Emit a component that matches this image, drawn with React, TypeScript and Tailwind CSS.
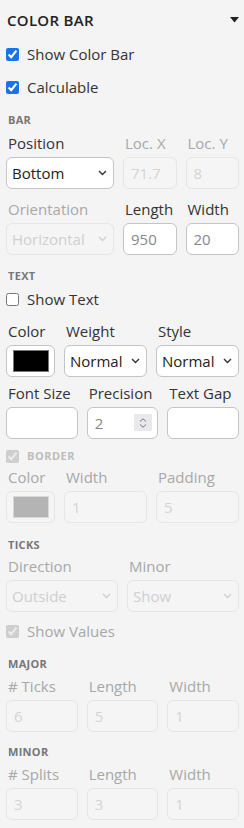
import React from 'react';

const font = { fontFamily: '"Open Sans", "Noto Sans", sans-serif' };

function Chevron({ disabled }: { disabled?: boolean }) {
    return (
        <svg
            className="pointer-events-none absolute right-[7px] top-1/2 -translate-y-1/2"
            width="9" height="6" viewBox="0 0 9 6" fill="none"
        >
            <path d="M1 1l3.5 3.5L8 1" stroke={disabled ? '#d0d0d0' : '#333'} strokeWidth="1.4" />
        </svg>
    );
}

function Select({ value, disabled }: { value: string; disabled?: boolean }) {
    return (
        <div className="relative">
            <select
                disabled={disabled}
                defaultValue={value}
                className={`h-8 w-full appearance-none rounded-md border pl-[5px] pr-5 text-[15px] outline-none ${disabled
                    ? 'border-[#e6e6e6] bg-[#f5f5f5] text-[#cfcfcf]'
                    : 'border-[#c4c4c4] bg-white text-[#222]'
                    }`}
            >
                <option>{value}</option>
            </select>
            <Chevron disabled={disabled} />
        </div>
    );
}

function TextBox({ value, disabled, spinner }: { value?: string; disabled?: boolean; spinner?: boolean }) {
    return (
        <div className="relative">
            <input
                type="text"
                readOnly
                disabled={disabled}
                defaultValue={value ?? ''}
                className={`h-8 w-full rounded-md border px-[7px] text-[15px] outline-none ${disabled
                    ? 'border-[#e6e6e6] bg-[#f5f5f5] text-[#d4d4d4]'
                    : 'border-[#c4c4c4] bg-white text-[#888]'
                    }`}
            />
            {spinner && (
                <span className="absolute right-[6px] top-[7px] flex h-[17px] w-[18px] flex-col items-center justify-center gap-[2px] bg-[#e9e9ed]">
                    <svg width="8" height="4" viewBox="0 0 8 4" fill="none"><path d="M1 3.5L4 0.8l3 2.7" stroke="#777" strokeWidth="1" /></svg>
                    <svg width="8" height="4" viewBox="0 0 8 4" fill="none"><path d="M1 0.5L4 3.2l3-2.7" stroke="#777" strokeWidth="1" /></svg>
                </span>
            )}
        </div>
    );
}

function ColorBox({ color, disabled }: { color: string; disabled?: boolean }) {
    return (
        <div className={`flex h-8 w-full items-center justify-center rounded-md border ${disabled ? 'border-[#e6e6e6] bg-[#f5f5f5]' : 'border-[#c4c4c4] bg-white'}`}>
            <div className={`h-[22px] w-[36px] border ${disabled ? 'border-[#d8d8d8]' : 'border-[#777]'}`} style={{ background: color }} />
        </div>
    );
}

function Label({ children, disabled, className = '' }: { children: React.ReactNode; disabled?: boolean; className?: string }) {
    return (
        <div className={`h-5 whitespace-nowrap pl-[2px] text-[15px] leading-5 ${disabled ? 'text-[#a8a8a8]' : 'text-[#333]'} ${className}`}>
            {children}
        </div>
    );
}

function Section({ children, className = '' }: { children: React.ReactNode; className?: string }) {
    return (
        <div className={`h-[14px] pl-[2px] text-[11px] font-bold leading-[14px] tracking-[0.3px] text-[#777] ${className}`}>
            {children}
        </div>
    );
}

function Check({ label, checked, disabled, className = '', labelClass = '' }: { label: string; checked?: boolean; disabled?: boolean; className?: string; labelClass?: string }) {
    return (
        <label className={`flex h-5 items-center gap-[8px] ${className}`}>
            <input
                type="checkbox"
                defaultChecked={checked}
                disabled={disabled}
                className="m-0 h-[13px] w-[13px] accent-[#1a73e8]"
            />
            <span className={`text-[15px] leading-5 ${disabled ? 'text-[#a8a8a8]' : 'text-[#333]'} ${labelClass}`}>{label}</span>
        </label>
    );
}

export default function App() {
    return (
        <div className="min-h-[828px] w-[244px] bg-[#f4f4f4] pb-2 pl-[6px] pr-[5px] pt-[10px]" style={font}>
            <div className="flex h-5 items-center justify-between">
                <span className="pl-[1px] text-[15px] font-semibold tracking-[0.3px] text-[#222]">COLOR BAR</span>
                <svg width="9" height="6" viewBox="0 0 9 6" className="mr-[0px]"><path d="M0 0h9L4.5 5.5z" fill="#222" /></svg>
            </div>

            <Check label="Show Color Bar" checked className="mt-[14px]" />
            <Check label="Calculable" checked className="mt-[13px]" />

            <Section className="mt-[16px]">BAR</Section>
            <div className="mt-[6px] grid grid-cols-[108px_1fr_1fr] gap-x-[9px]">
                <Label>Position</Label>
                <Label disabled>Loc. X</Label>
                <Label disabled>Loc. Y</Label>
                <div className="mt-1"><Select value="Bottom" /></div>
                <div className="mt-1"><TextBox value="71.7" disabled /></div>
                <div className="mt-1"><TextBox value="8" disabled /></div>
                <Label disabled className="mt-[10px]">Orientation</Label>
                <Label className="mt-[10px]">Length</Label>
                <Label className="mt-[10px]">Width</Label>
                <div className="mt-1"><Select value="Horizontal" disabled /></div>
                <div className="mt-1"><TextBox value="950" /></div>
                <div className="mt-1"><TextBox value="20" /></div>
            </div>

            <Section className="mt-[14px]">TEXT</Section>
            <Check label="Show Text" className="mt-[6px]" />

            <div className="mt-[12px] grid grid-cols-[49px_1fr_1fr] gap-x-[9px]">
                <Label>Color</Label>
                <Label>Weight</Label>
                <Label>Style</Label>
                <div className="mt-1"><ColorBox color="#000" /></div>
                <div className="mt-1"><Select value="Normal" /></div>
                <div className="mt-1"><Select value="Normal" /></div>
            </div>

            <div className="mt-[6px] grid grid-cols-3 gap-x-[9px]">
                <Label>Font Size</Label>
                <Label>Precision</Label>
                <Label>Text Gap</Label>
                <div className="mt-1"><TextBox /></div>
                <div className="mt-1"><TextBox value="2" spinner /></div>
                <div className="mt-1"><TextBox /></div>
            </div>

            <Check label="BORDER" checked disabled className="mt-[7px]" labelClass="!text-[11px] font-bold tracking-[0.5px] !text-[#bdbdbd]" />
            <div className="mt-[1px] grid grid-cols-[49px_1fr_1fr] gap-x-[9px]">
                <Label disabled>Color</Label>
                <Label disabled>Width</Label>
                <Label disabled>Padding</Label>
                <div className="mt-1"><ColorBox color="#b4b4b4" disabled /></div>
                <div className="mt-1"><TextBox value="1" disabled /></div>
                <div className="mt-1"><TextBox value="5" disabled /></div>
            </div>

            <Section className="mt-[15px]">TICKS</Section>
            <div className="mt-[4px] grid grid-cols-2 gap-x-[9px]">
                <Label disabled>Direction</Label>
                <Label disabled>Minor</Label>
                <div className="mt-1"><Select value="Outside" disabled /></div>
                <div className="mt-1"><Select value="Show" disabled /></div>
            </div>
            <Check label="Show Values" checked disabled className="mt-[9px]" />

            <Section className="mt-[16px]">MAJOR</Section>
            <div className="mt-[5px] grid grid-cols-3 gap-x-[9px]">
                <Label disabled># Ticks</Label>
                <Label disabled>Length</Label>
                <Label disabled>Width</Label>
                <div className="mt-1"><TextBox value="6" disabled /></div>
                <div className="mt-1"><TextBox value="5" disabled /></div>
                <div className="mt-1"><TextBox value="1" disabled /></div>
            </div>

            <Section className="mt-[13px]">MINOR</Section>
            <div className="mt-[5px] grid grid-cols-3 gap-x-[9px]">
                <Label disabled># Splits</Label>
                <Label disabled>Length</Label>
                <Label disabled>Width</Label>
                <div className="mt-1"><TextBox value="3" disabled /></div>
                <div className="mt-1"><TextBox value="3" disabled /></div>
                <div className="mt-1"><TextBox value="1" disabled /></div>
            </div>
        </div>
    );
}
